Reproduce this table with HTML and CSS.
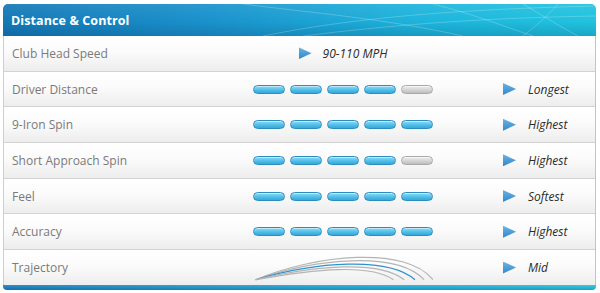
FILE: index.html
```html
<!DOCTYPE html>
<html lang="en">
<head>
    <meta charset="UTF-8">
    <meta name="viewport" content="width=device-width, initial-scale=1.0">
    <title>Distance &amp; Control</title>
    <link rel="stylesheet" href="styles.css">
</head>
<body>
    <div class="panel">
        <div class="panel-head">
            <!-- light streaks across the header -->
            <svg class="streaks" width="593" height="32" viewBox="0 0 593 32">
                <path d="M260 32 C330 18 420 6 593 2" />
                <path d="M300 32 C380 22 470 14 593 12" />
                <path d="M430 0 C470 10 500 22 530 32" />
                <path d="M520 0 C540 12 560 24 575 32" />
                <path d="M555 0 C545 12 530 24 520 32" />
                <path d="M240 0 C300 8 380 14 460 32" />
            </svg>
            <h2>Distance &amp; Control</h2>
        </div>

        <div class="rows">
            <div class="row">
                <span class="label">Club Head Speed</span>
                <div class="meter speed">
                    <span class="arrow"></span>
                    <span class="value">90-110 MPH</span>
                </div>
            </div>
            <div class="row">
                <span class="label">Driver Distance</span>
                <div class="meter">
                    <span class="pill on"></span><span class="pill on"></span><span class="pill on"></span><span class="pill on"></span><span class="pill"></span>
                </div>
                <div class="result"><span class="arrow"></span><span class="value">Longest</span></div>
            </div>
            <div class="row">
                <span class="label">9-Iron Spin</span>
                <div class="meter">
                    <span class="pill on"></span><span class="pill on"></span><span class="pill on"></span><span class="pill on"></span><span class="pill on"></span>
                </div>
                <div class="result"><span class="arrow"></span><span class="value">Highest</span></div>
            </div>
            <div class="row">
                <span class="label">Short Approach Spin</span>
                <div class="meter">
                    <span class="pill on"></span><span class="pill on"></span><span class="pill on"></span><span class="pill on"></span><span class="pill"></span>
                </div>
                <div class="result"><span class="arrow"></span><span class="value">Highest</span></div>
            </div>
            <div class="row">
                <span class="label">Feel</span>
                <div class="meter">
                    <span class="pill on"></span><span class="pill on"></span><span class="pill on"></span><span class="pill on"></span><span class="pill on"></span>
                </div>
                <div class="result"><span class="arrow"></span><span class="value">Softest</span></div>
            </div>
            <div class="row">
                <span class="label">Accuracy</span>
                <div class="meter">
                    <span class="pill on"></span><span class="pill on"></span><span class="pill on"></span><span class="pill on"></span><span class="pill on"></span>
                </div>
                <div class="result"><span class="arrow"></span><span class="value">Highest</span></div>
            </div>
            <div class="row">
                <span class="label">Trajectory</span>
                <div class="meter">
                    <svg class="flight" width="200" height="34" viewBox="0 0 200 34">
                        <path d="M3 30 C70 2 170 -8 200 30" />
                        <path d="M3 30 C70 6 160 -2 190 30" />
                        <path class="mid" d="M3 30 C70 10 150 4 180 30" />
                        <path d="M3 30 C70 14 140 8 168 30" />
                        <path d="M3 30 C70 18 130 12 156 30" />
                    </svg>
                </div>
                <div class="result"><span class="arrow"></span><span class="value">Mid</span></div>
            </div>
        </div>

        <div class="panel-foot"></div>
    </div>
</body>
</html>
```

FILE: styles.css
```css
body {
    margin: 0;
    padding: 0;
    background-color: #ffffff;
    font-family: 'Open Sans', 'DejaVu Sans', sans-serif;
}

.panel {
    width: 593px;
    height: 286px;
    margin: 4px 0 0 3px;
    display: flex;
    flex-direction: column;
}

.panel-head {
    position: relative;
    height: 32px;
    display: flex;
    align-items: center;
    padding-left: 8px;
    border-radius: 5px 5px 0 0;
    overflow: hidden;
    background:
        linear-gradient(rgba(255,255,255,0.08), rgba(255,255,255,0) 55%, rgba(0,40,80,0.18)),
        linear-gradient(90deg, #1478b6 0%, #1a92cc 35%, #1db4dc 70%, #20c3df 100%);
}

.streaks {
    position: absolute;
    left: 0;
    top: 0;
}

.streaks path {
    fill: none;
    stroke: rgba(255,255,255,0.22);
    stroke-width: 1;
}

.panel-head h2 {
    position: relative;
    margin: 0;
    color: #ffffff;
    font-size: 12.5px;
    font-weight: 700;
    letter-spacing: 0.1px;
}

.rows {
    flex: 1;
    display: flex;
    flex-direction: column;
    border-left: 1px solid #cfcfcf;
    border-right: 1px solid #c4c4c4;
}

.row {
    flex: 1;
    display: flex;
    align-items: center;
    border-bottom: 1px solid #d3d3d3;
    background: linear-gradient(#ffffff, #fbfbfb 45%, #ededed);
}

.row:last-child {
    border-bottom: none;
}

.label {
    width: 241px;
    padding-left: 8px;
    color: #7a7a7a;
    font-size: 12px;
}

.meter {
    width: 180px;
    display: flex;
    align-items: center;
    gap: 5px;
}

.meter.speed {
    justify-content: center;
    gap: 11px;
    padding-right: 5px;
}

.pill {
    width: 30px;
    height: 7px;
    border-radius: 5px;
    border: 1px solid #a9a9a9;
    background: linear-gradient(#ededed, #d2d2d2 60%, #bdbdbd);
    box-shadow: inset 0 1px 0 rgba(255,255,255,0.6);
}

.pill.on {
    border-color: #2e8dc0;
    background: linear-gradient(#8fdcf4, #52bfea 55%, #35a7da);
    box-shadow: inset 0 1px 0 rgba(255,255,255,0.45);
}

.flight {
    margin-top: 1px;
}

.flight path {
    fill: none;
    stroke: #b4b4b4;
    stroke-width: 1.3;
}

.flight path.mid {
    stroke: #2a93cf;
}

.result {
    margin-left: 70px;
    display: flex;
    align-items: center;
    gap: 12px;
}

.arrow {
    width: 13px;
    height: 12px;
    background: linear-gradient(#69b4e6, #3386c9);
    clip-path: polygon(0 0, 100% 50%, 0 100%);
}

.value {
    color: #2b2b2b;
    font-size: 12px;
    font-style: italic;
}

.panel-foot {
    height: 5px;
    border-radius: 0 0 4px 4px;
    background:
        linear-gradient(rgba(255,255,255,0.1), rgba(0,40,80,0.2)),
        linear-gradient(90deg, #1680c2, #1ea6d8 50%, #22c2e0);
}
```
